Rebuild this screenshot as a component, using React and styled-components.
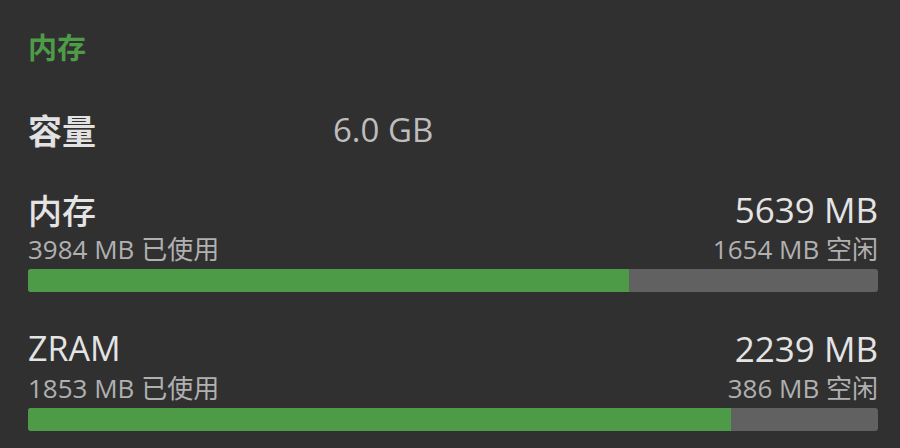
import React from "react";
import styled, { createGlobalStyle } from "styled-components";

const GlobalStyle = createGlobalStyle`
  html, body {
    margin: 0;
    padding: 0;
    background: #303030;
  }
  body {
    font-family: "Open Sans", "Noto Sans CJK SC", sans-serif;
  }
`;

const Page = styled.div`
  width: 900px;
  height: 448px;
  overflow: hidden;
  background: #303030;
  padding: 28px 22px 0 28px;
  box-sizing: border-box;
  display: flex;
  flex-direction: column;
`;

const SectionTitle = styled.div`
  color: #4e9b48;
  font-size: 29px;
  line-height: 40px;
  font-weight: 700;
`;

const InfoRow = styled.div`
  display: flex;
  align-items: center;
  margin-top: 39px;
  height: 44px;
`;

const InfoLabel = styled.div`
  width: 305px;
  color: #e2e2e2;
  font-size: 34px;
  font-weight: 700;
`;

const InfoValue = styled.div`
  color: #bdbdbd;
  font-size: 33px;
`;

const Usage = styled.div`
  display: flex;
  flex-direction: column;
  margin-top: ${(p) => p.$gap}px;
`;

const Line = styled.div`
  display: flex;
  justify-content: space-between;
  align-items: center;
  height: ${(p) => p.$h}px;
  margin-top: ${(p) => p.$mt || 0}px;
`;

const Name = styled.span`
  color: #e4e4e4;
  font-size: 34px;
  font-weight: 500;
`;

const Total = styled.span`
  color: #e4e4e4;
  font-size: 35px;
`;

const Sub = styled.span`
  color: #b0b0b0;
  font-size: 26px;
`;

const Track = styled.div`
  margin-top: 5px;
  height: 23px;
  background: #616161;
  border-radius: 3px;
  overflow: hidden;
`;

const Fill = styled.div`
  height: 100%;
  background: #4d9b46;
`;

const items = [
  { name: "内存", used: 3984, free: 1654, total: 5639 },
  { name: "ZRAM", used: 1853, free: 386, total: 2239 },
];

export default function App() {
  return (
    <>
      <GlobalStyle />
      <Page>
        <SectionTitle>内存</SectionTitle>
        <InfoRow>
          <InfoLabel>容量</InfoLabel>
          <InfoValue>6.0 GB</InfoValue>
        </InfoRow>
        {items.map((it, i) => (
          <Usage key={it.name} $gap={i === 0 ? 38 : 36}>
            <Line $h={40}>
              <Name>{it.name}</Name>
              <Total>{it.total} MB</Total>
            </Line>
            <Line $h={32} $mt={3}>
              <Sub>{it.used} MB 已使用</Sub>
              <Sub>{it.free} MB 空闲</Sub>
            </Line>
            <Track>
              <Fill style={{ width: `${(it.used / it.total) * 100}%` }} />
            </Track>
          </Usage>
        ))}
      </Page>
    </>
  );
}
